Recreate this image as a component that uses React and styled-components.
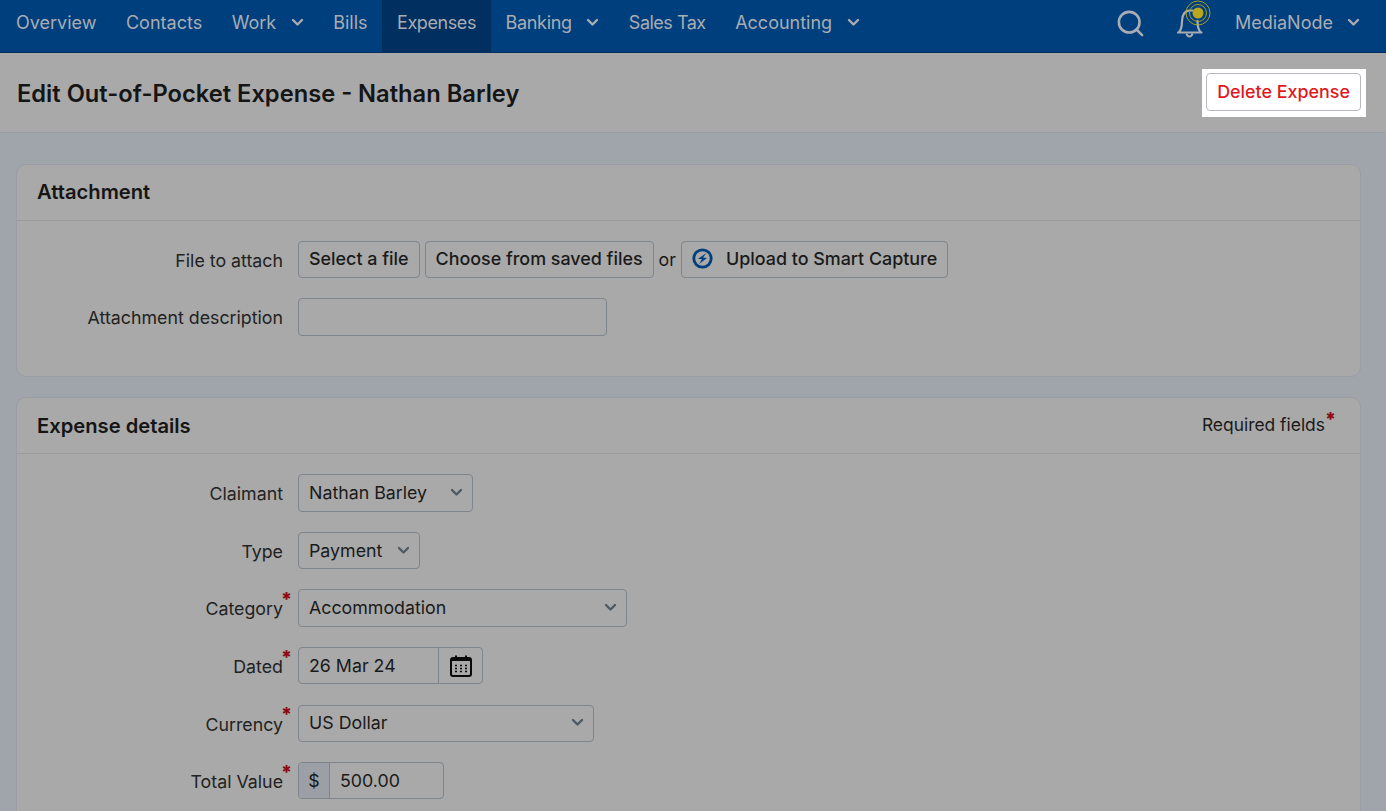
import React from 'react';
import styled, { createGlobalStyle } from 'styled-components';
import { Search } from 'lucide-react';

const GlobalStyle = createGlobalStyle`
    html, body {
        margin: 0;
        height: 100%;
        overflow: hidden;
        background: #a0a4ab;
    }
    body {
        font-family: "Inter", "Liberation Sans", sans-serif;
        font-size: 17.8px;
        color: #1a1a1a;
    }
    * { box-sizing: border-box; }
`;

const Nav = styled.nav`
    display: flex;
    align-items: stretch;
    justify-content: space-between;
    height: 53px;
    background: #003f7d;
    border-bottom: 1px solid #002f60;
`;

const NavGroup = styled.div`
    display: flex;
    align-items: stretch;
`;

const NavItem = styled.a`
    display: flex;
    align-items: center;
    gap: 14.5px;
    padding: 0 14.75px 7px;
    color: #a9adb3;
    font-size: 18px;
    letter-spacing: ${({ $track }) => $track || 0}px;
    background: ${({ $active }) => ($active ? '#002f60' : 'transparent')};

    &:first-child {
        padding-left: 16px;
    }
`;

const NavIcons = styled.div`
    display: flex;
    align-items: center;
    gap: 22px;
    padding-bottom: 7px;
    margin-right: 26px;
    color: #a9adb3;
`;

const NavUser = styled.span`
    display: flex;
    align-items: center;
    gap: 14px;
    font-size: 18px;
`;

const SearchIcon = styled(Search)`
    margin: 2px 9px 0 0;
`;

const Bell = styled.span`
    display: block;
    align-self: flex-start;
    width: 36px;
    height: 38px;
`;

const PageHead = styled.header`
    display: flex;
    align-items: center;
    justify-content: space-between;
    height: 80px;
    padding: 0 20px 0 17px;
    background: #a9a9a9;
    border-bottom: 1px solid #9a9da3;
`;

const Title = styled.h1`
    margin: 0;
    padding-top: 2px;
    font-size: 23.7px;
    font-weight: 600;
    color: #151515;
`;

const Spotlight = styled.div`
    padding: 4.5px 5px 5.5px 4px;
    background: #fff;
`;

const DeleteButton = styled.button`
    display: block;
    height: 38px;
    padding: 0 10px 1px;
    background: #fff;
    border: 1px solid #b5b9bf;
    border-radius: 4px;
    color: #e1191f;
    font: 500 17.9px "Inter", sans-serif;
`;

const Main = styled.main`
    display: flex;
    flex-direction: column;
    gap: 20.5px;
    padding: 30.5px 25px 0 16px;
`;

const Card = styled.section`
    background: #a9a9a9;
    border: 1px solid #9a9da3;
    border-radius: 10px;
`;

const CardHead = styled.div`
    display: flex;
    align-items: center;
    justify-content: space-between;
    height: 56px;
    padding: 0 24px 0 20px;
    border-bottom: 1px solid #9a9a9e;
`;

const CardTitle = styled.h2`
    margin: 0;
    padding-bottom: 1px;
    font-size: 20.2px;
    font-weight: 600;
    color: #151515;
`;

const Required = styled.span`
    padding-bottom: 2px;
    font-size: 17.4px;
`;

const Star = styled.sup`
    color: #8c0a12;
    font-size: 19px;
    font-weight: 800;
    line-height: 0;
    vertical-align: 5px;
`;

const CardBody = styled.div`
    display: flex;
    flex-direction: column;
    gap: 20px;
    padding: 20px 0 40px;
`;

const Row = styled.div`
    display: flex;
    align-items: center;
    gap: 15px;
    min-height: 37.6px;
`;

const Label = styled.label`
    position: relative;
    width: 266px;
    padding-top: 1.5px;
    text-align: right;
    font-size: 17.8px;
    color: #222;
`;

const LabelStar = styled(Star)`
    position: absolute;
    top: 3px;
    right: -9px;
`;

const Controls = styled.div`
    display: flex;
    align-items: center;
    gap: 5px;
`;

const Button = styled.button`
    display: flex;
    align-items: center;
    gap: 13px;
    height: 37px;
    padding: 0 10px 1px;
    background: transparent;
    border: 1px solid #7e858c;
    border-radius: 4px;
    color: #1a1a1a;
    font: 500 17.9px "Inter", sans-serif;
`;

const TextInput = styled.div`
    width: ${({ $width }) => $width}px;
    height: 37.5px;
    border: 1px solid #7e858c;
    border-radius: 4px;
`;

const Select = styled.div`
    display: flex;
    align-items: center;
    justify-content: space-between;
    width: ${({ $width }) => $width}px;
    height: 37.5px;
    padding: 0 9px 1px 10px;
    border: 1px solid #7e858c;
    border-radius: 4px;
`;

const Chevron = styled.svg`
    width: 13px;
    height: 9px;
    fill: none;
    stroke: ${({ $color }) => $color || '#4d5964'};
    stroke-width: 2.4;
    stroke-linecap: round;
    stroke-linejoin: round;
`;

const Group = styled.div`
    display: flex;
    align-items: stretch;
    width: ${({ $width }) => $width}px;
    height: 37px;
    border: 1px solid #7e858c;
    border-radius: 4px;
`;

const GroupValue = styled.span`
    flex: 1;
    display: flex;
    align-items: center;
    padding: 0 0 1px 10px;
`;

const CalendarCell = styled.span`
    display: flex;
    align-items: center;
    justify-content: center;
    width: 44px;
    border-left: 1px solid #7e858c;
`;

const Prefix = styled.span`
    display: flex;
    align-items: center;
    justify-content: center;
    width: 31px;
    background: #9ca0a6;
    border-right: 1px solid #7e858c;
    border-radius: 3px 0 0 3px;
`;

const Caret = ({ color }) => (
    <Chevron viewBox="0 0 13 9" $color={color}>
        <path d="M2 2l4.5 4.5L11 2" />
    </Chevron>
);

const BellIcon = () => (
    <Bell>
        <svg width="36" height="38" viewBox="0 0 36 38" fill="none">
            <path d="M1 32.500h23.500M2 32c2.500-2.500 3-6 3-11 0-6 3-10.500 7.500-10.500h3" stroke="#a9adb3" strokeWidth="2.200" strokeLinecap="round" />
            <path d="M20.500 21c0 5 .5 8.500 3 11" stroke="#a9adb3" strokeWidth="2.200" strokeLinecap="round" />
            <path d="M9.500 33.500c.5 2 1.500 3 3 3s2.500-1 3-3" stroke="#a9adb3" strokeWidth="2" />
            <circle cx="21" cy="13" r="5.500" fill="#b9a81c" />
            <circle cx="21" cy="13" r="8.500" stroke="#b9a81c" strokeWidth="0.900" />
            <circle cx="21" cy="13" r="12" stroke="#b9a81c" strokeWidth="0.900" />
        </svg>
    </Bell>
);

const CaptureIcon = () => (
    <svg width="21" height="21" viewBox="0 0 21 21" fill="none">
        <circle cx="10.500" cy="10.500" r="8.700" stroke="#003f7d" strokeWidth="2.800" />
        <path d="M14.500 5L6 10.800l4 .4L7 16l8-6-4-.5z" fill="#003f7d" />
    </svg>
);

const CalendarIcon = () => (
    <svg width="24" height="24" viewBox="0 0 24 24" fill="none">
        <rect x="2" y="4" width="20" height="18" rx="2" stroke="#0a0a0a" strokeWidth="2" />
        <rect x="2" y="4" width="20" height="3" fill="#0a0a0a" />
        <path d="M7 1.500v4M17 1.500v4" stroke="#0a0a0a" strokeWidth="2" />
        <path d="M6 11.500h2M11 11.500h2M16 11.500h2M6 14.500h2M11 14.500h2M16 14.500h2M6 17.500h2M11 17.500h2M16 17.500h2" stroke="#0a0a0a" strokeWidth="1.500" />
    </svg>
);

const App = () => {
    return (
        <>
            <GlobalStyle />
            <Nav>
                <NavGroup>
                    <NavItem>Overview</NavItem>
                    <NavItem>Contacts</NavItem>
                    <NavItem>Work <Caret color="#a9adb3" /></NavItem>
                    <NavItem>Bills</NavItem>
                    <NavItem $active $track={-0.42}>Expenses</NavItem>
                    <NavItem $track={-0.3}>Banking <Caret color="#a9adb3" /></NavItem>
                    <NavItem $track={-0.5}>Sales Tax</NavItem>
                    <NavItem>Accounting <Caret color="#a9adb3" /></NavItem>
                </NavGroup>
                <NavIcons>
                    <SearchIcon size={31} strokeWidth={2} />
                    <BellIcon />
                    <NavUser>MediaNode <Caret color="#a9adb3" /></NavUser>
                </NavIcons>
            </Nav>
            <PageHead>
                <Title>Edit Out-of-Pocket Expense - Nathan Barley</Title>
                <Spotlight>
                    <DeleteButton>Delete Expense</DeleteButton>
                </Spotlight>
            </PageHead>
            <Main>
                <Card>
                    <CardHead>
                        <CardTitle>Attachment</CardTitle>
                    </CardHead>
                    <CardBody>
                        <Row>
                            <Label>File to attach</Label>
                            <Controls>
                                <Button>Select a file</Button>
                                <Button>Choose from saved files</Button>
                                <span>or</span>
                                <Button><CaptureIcon /> Upload to Smart Capture</Button>
                            </Controls>
                        </Row>
                        <Row>
                            <Label>Attachment description</Label>
                            <TextInput $width={309} />
                        </Row>
                    </CardBody>
                </Card>
                <Card>
                    <CardHead>
                        <CardTitle>Expense details</CardTitle>
                        <Required>Required fields<Star>*</Star></Required>
                    </CardHead>
                    <CardBody>
                        <Row>
                            <Label>Claimant</Label>
                            <Select $width={175}>Nathan Barley <Caret /></Select>
                        </Row>
                        <Row>
                            <Label>Type</Label>
                            <Select $width={122}>Payment <Caret /></Select>
                        </Row>
                        <Row>
                            <Label>Category<LabelStar>*</LabelStar></Label>
                            <Select $width={329}>Accommodation <Caret /></Select>
                        </Row>
                        <Row>
                            <Label>Dated<LabelStar>*</LabelStar></Label>
                            <Group $width={185}>
                                <GroupValue>26 Mar 24</GroupValue>
                                <CalendarCell><CalendarIcon /></CalendarCell>
                            </Group>
                        </Row>
                        <Row>
                            <Label>Currency<LabelStar>*</LabelStar></Label>
                            <Select $width={296}>US Dollar <Caret /></Select>
                        </Row>
                        <Row>
                            <Label>Total Value<LabelStar>*</LabelStar></Label>
                            <Group $width={146}>
                                <Prefix>$</Prefix>
                                <GroupValue>500.00</GroupValue>
                            </Group>
                        </Row>
                    </CardBody>
                </Card>
            </Main>
        </>
    );
};

export default App;
